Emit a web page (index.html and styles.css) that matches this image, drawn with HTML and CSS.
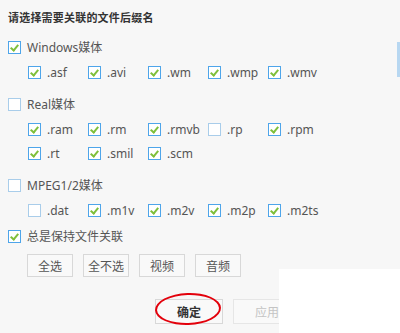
FILE: index.html
```html
<!DOCTYPE html>
<html lang="zh-CN">
<head>
    <meta charset="UTF-8">
    <title>文件关联</title>
    <link rel="stylesheet" href="styles.css">
</head>
<body>
    <div class="title">请选择需要关联的文件后缀名</div>

    <div class="group">
        <label class="row"><span class="box on"></span>Windows媒体</label>
        <div class="exts">
            <label class="row"><span class="box on"></span>.asf</label>
            <label class="row"><span class="box on"></span>.avi</label>
            <label class="row"><span class="box on"></span>.wm</label>
            <label class="row"><span class="box on"></span>.wmp</label>
            <label class="row"><span class="box on"></span>.wmv</label>
        </div>
    </div>

    <div class="group">
        <label class="row"><span class="box"></span>Real媒体</label>
        <div class="exts">
            <label class="row"><span class="box on"></span>.ram</label>
            <label class="row"><span class="box on"></span>.rm</label>
            <label class="row"><span class="box on"></span>.rmvb</label>
            <label class="row"><span class="box"></span>.rp</label>
            <label class="row"><span class="box on"></span>.rpm</label>
            <label class="row"><span class="box on"></span>.rt</label>
            <label class="row"><span class="box on"></span>.smil</label>
            <label class="row"><span class="box on"></span>.scm</label>
        </div>
    </div>

    <div class="group">
        <label class="row"><span class="box"></span>MPEG1/2媒体</label>
        <div class="exts">
            <label class="row"><span class="box"></span>.dat</label>
            <label class="row"><span class="box on"></span>.m1v</label>
            <label class="row"><span class="box on"></span>.m2v</label>
            <label class="row"><span class="box on"></span>.m2p</label>
            <label class="row"><span class="box on"></span>.m2ts</label>
        </div>
    </div>

    <label class="row keep"><span class="box on"></span>总是保持文件关联</label>

    <div class="quick">
        <button class="btn">全选</button>
        <button class="btn">全不选</button>
        <button class="btn">视频</button>
        <button class="btn">音频</button>
    </div>

    <div class="actions">
        <div class="mark">
            <button class="btn big ok">确定</button>
            <span class="ring"></span>
        </div>
        <button class="btn big off">应用</button>
    </div>

    <div class="scroll"></div>
    <div class="blank"></div>
</body>
</html>
```

FILE: styles.css
```css
body {
    margin: 0;
    padding: 5px 8px 0;
    background-color: #f7f7f7;
    color: #555;
    font-family: "Noto Sans", "Noto Sans CJK SC", sans-serif;
    font-size: 12px;
    height: 333px;
    box-sizing: border-box;
    overflow: hidden;
    position: relative;
}

.title {
    height: 24px;
    line-height: 24px;
    font-size: 11px;
    letter-spacing: 0.2px;
    font-weight: bold;
    color: #333;
    font-family: "Noto Sans CJK SC", sans-serif;
    margin-bottom: 6px;
}

.group {
    margin-bottom: 8px;
}

.row {
    display: flex;
    align-items: center;
    height: 24px;
    gap: 6px;
    white-space: nowrap;
}

.exts {
    display: grid;
    grid-template-columns: repeat(5, 60px);
    padding-left: 20px;
    margin-top: 1px;
}

.box {
    width: 11px;
    height: 11px;
    border: 1px solid #a9cdea;
    background: #fff;
    flex: none;
    position: relative;
}

.box.on {
    border-color: #4ea5ea;
}

.box.on::after {
    content: "";
    position: absolute;
    left: 3px;
    top: 1px;
    width: 3px;
    height: 6px;
    border: solid #7fbf3b;
    border-width: 0 2px 2px 0;
    transform: rotate(40deg);
}

.keep {
    margin-top: -6px;
}

.quick {
    display: flex;
    gap: 10px;
    padding-left: 19px;
    margin-top: 6px;
}

.btn {
    width: 46px;
    height: 23px;
    padding: 0;
    border: 1px solid #d8d8d8;
    background: #f9f9f9;
    color: #555;
    font-family: "Noto Sans CJK SC", sans-serif;
    font-size: 12px;
}

.actions {
    display: flex;
    gap: 10px;
    padding-left: 147px;
    margin-top: 22px;
}

.mark {
    position: relative;
}

.btn.big {
    width: 68px;
    height: 25px;
}

.ok {
    color: #333;
    font-weight: bold;
}

.off {
    color: #c4c4c4;
    border-color: #e6e6e6;
}

.ring {
    position: absolute;
    left: 0;
    top: -6px;
    width: 62px;
    height: 28px;
    border: 2.5px solid #e3000b;
    border-radius: 50%;
    transform: rotate(-2deg);
}

.scroll {
    position: absolute;
    right: 0;
    top: 42px;
    width: 3px;
    height: 35px;
    background: #b7d7f1;
}

.blank {
    position: absolute;
    left: 279px;
    top: 269px;
    right: 0;
    bottom: 0;
    background: #fff;
}
```
